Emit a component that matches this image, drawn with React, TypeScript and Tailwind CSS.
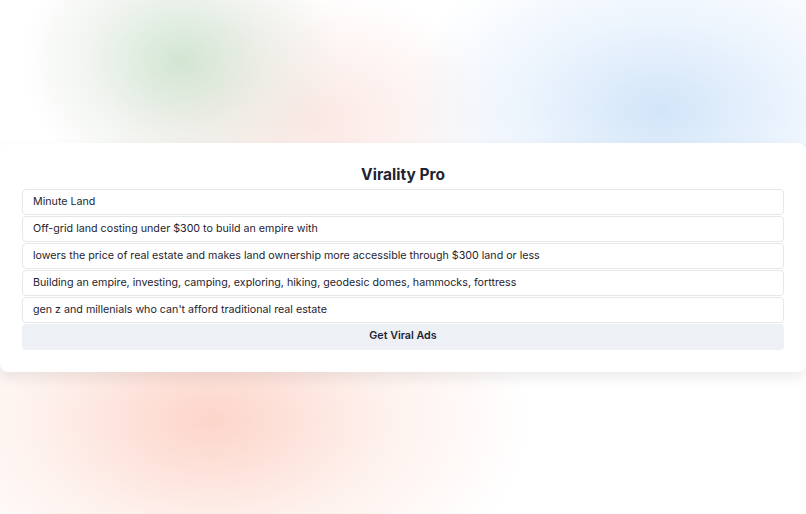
export default function App() {
  const fields = [
    "Minute Land",
    "Off-grid land costing under $300 to build an empire with",
    "lowers the price of real estate and makes land ownership more accessible through $300 land or less",
    "Building an empire, investing, camping, exploring, hiking, geodesic domes, hammocks, forttress",
    "gen z and millenials who can't afford traditional real estate",
  ];

  return (
    <div
      className="h-screen w-full flex items-center bg-white bg-[radial-gradient(ellipse_160px_130px_at_180px_60px,rgba(185,218,190,0.65)_0%,rgba(225,232,222,0.5)_55%,transparent_100%),radial-gradient(ellipse_260px_170px_at_660px_110px,rgba(205,226,248,0.9)_0%,rgba(226,238,252,0.6)_55%,transparent_100%),radial-gradient(ellipse_200px_130px_at_310px_120px,rgba(250,225,220,0.8)_0%,transparent_100%),radial-gradient(ellipse_320px_200px_at_210px_420px,rgba(252,205,192,0.85)_0%,rgba(253,228,220,0.5)_55%,transparent_100%)]"
      style={{ fontFamily: "Inter, 'Liberation Sans', sans-serif" }}
    >
      <div className="w-full bg-white rounded-lg shadow-[0_6px_14px_rgba(0,0,0,0.08)] px-[22px] pt-5 pb-[22px]">
        <h1 className="text-center text-[15.5px] leading-6 font-bold text-[#1f2430] mb-[2px]">
          Virality Pro
        </h1>
        <div className="flex flex-col gap-px">
          {fields.map((f) => (
            <input
              key={f}
              readOnly
              defaultValue={f}
              className="h-[26px] w-full rounded-[4px] border border-[#e5e7eb] bg-white px-[10px] text-[10.7px] text-[#1f2430] outline-none"
            />
          ))}
          <button className="h-[26px] w-full rounded-[4px] bg-[#edf1f5] text-[10.7px] font-semibold text-[#1f2430]">
            Get Viral Ads
          </button>
        </div>
      </div>
    </div>
  );
}
